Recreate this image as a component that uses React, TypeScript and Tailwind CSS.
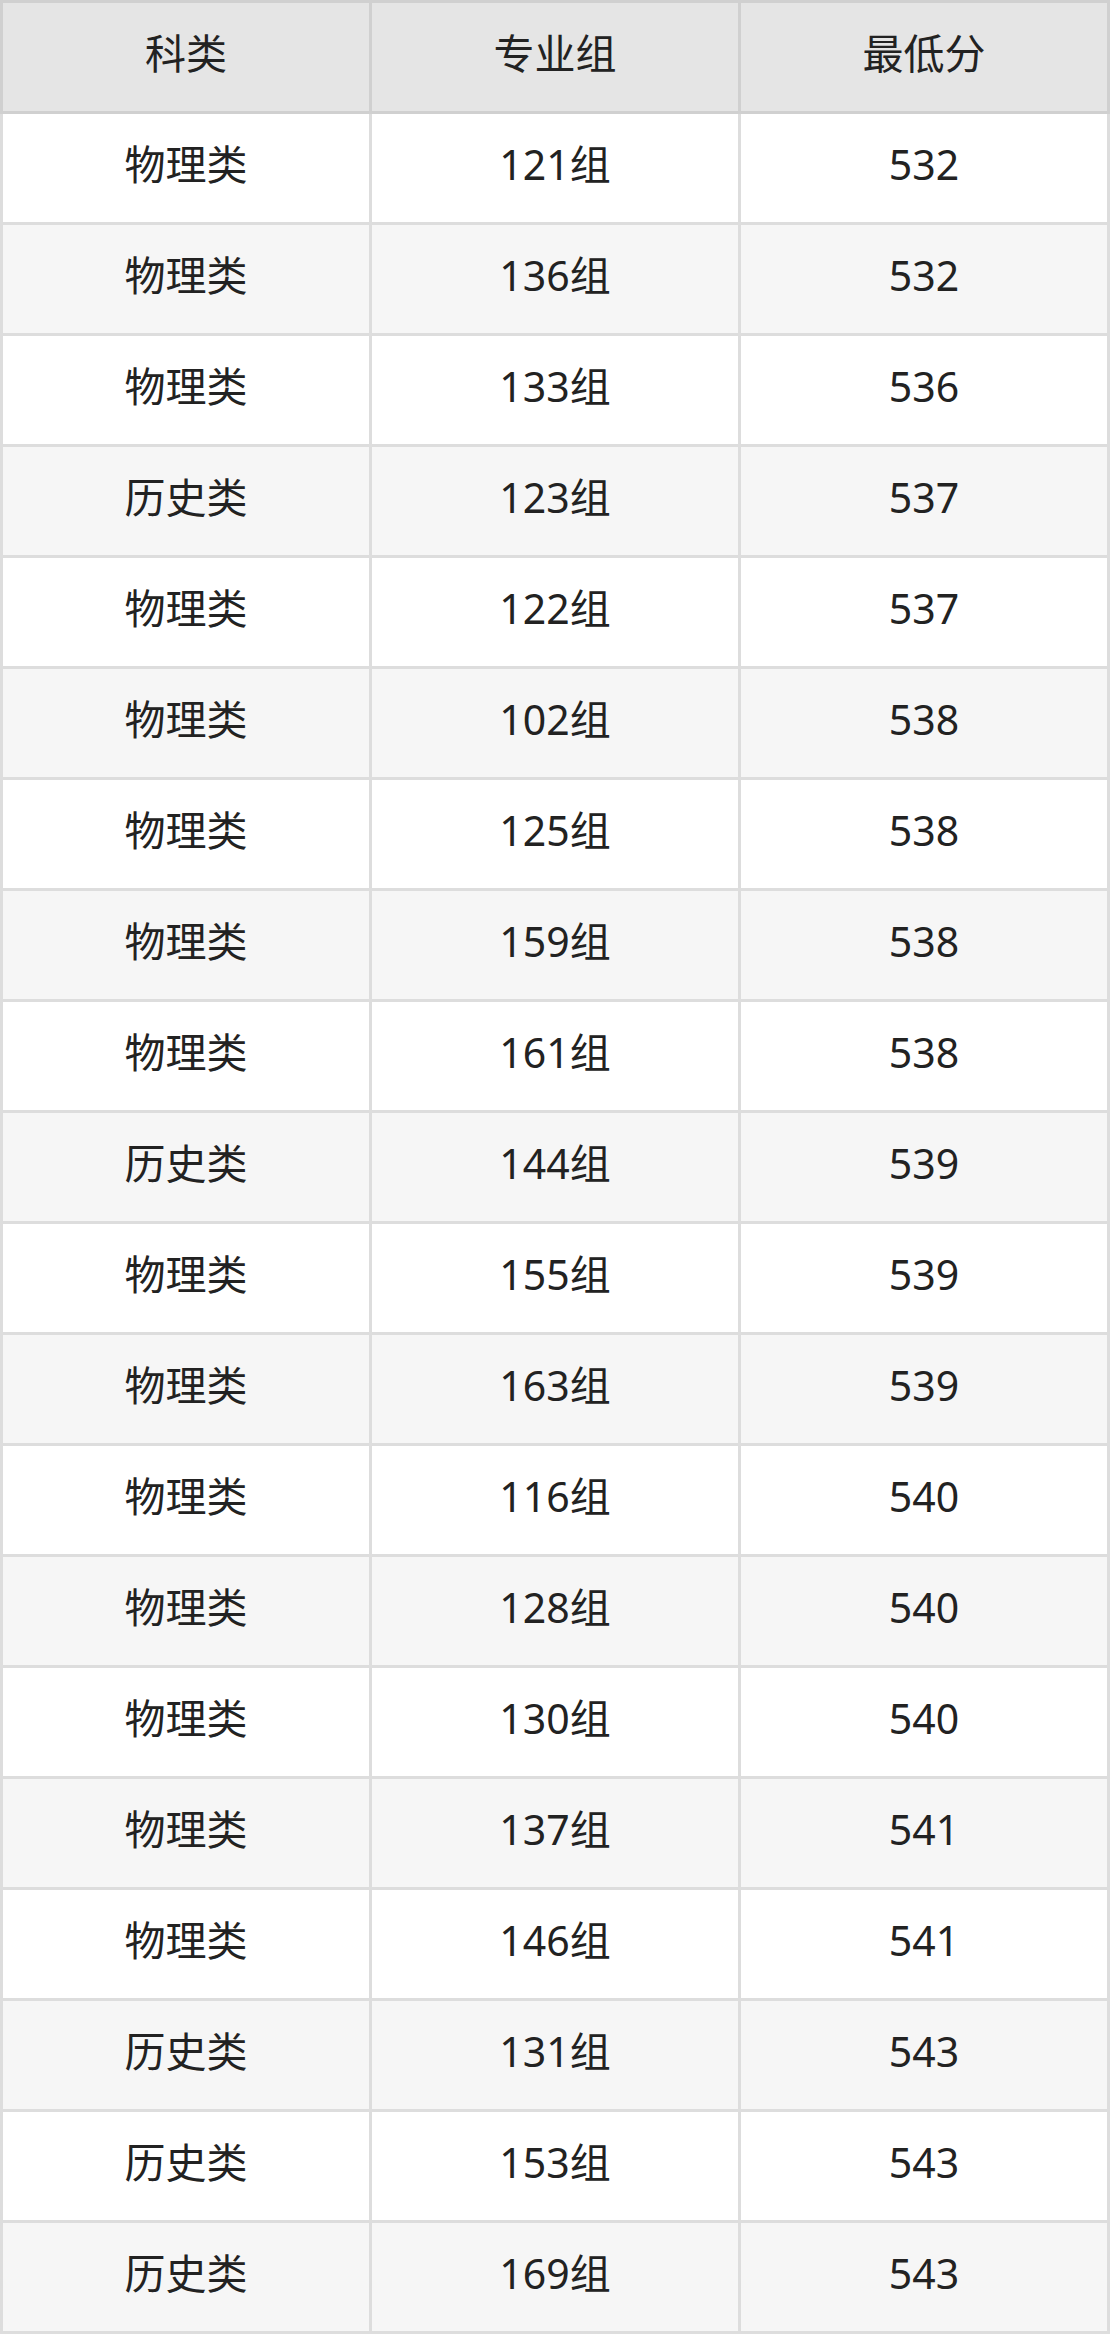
const rows: [string, string, string][] = [
  ["物理类", "121组", "532"],
  ["物理类", "136组", "532"],
  ["物理类", "133组", "536"],
  ["历史类", "123组", "537"],
  ["物理类", "122组", "537"],
  ["物理类", "102组", "538"],
  ["物理类", "125组", "538"],
  ["物理类", "159组", "538"],
  ["物理类", "161组", "538"],
  ["历史类", "144组", "539"],
  ["物理类", "155组", "539"],
  ["物理类", "163组", "539"],
  ["物理类", "116组", "540"],
  ["物理类", "128组", "540"],
  ["物理类", "130组", "540"],
  ["物理类", "137组", "541"],
  ["物理类", "146组", "541"],
  ["历史类", "131组", "543"],
  ["历史类", "153组", "543"],
  ["历史类", "169组", "543"],
];

const headers = ["科类", "专业组", "最低分"];

export default function App() {
  return (
    <div
      className="w-[1110px] bg-white text-[41px] text-[#222222]"
      style={{ fontFamily: '"Noto Sans", "Noto Sans CJK SC", sans-serif' }}
    >
      <div className="grid grid-cols-3 border-t-[3px] border-l-[3px] border-[#d0d0d0] bg-[#e5e5e5]">
        {headers.map((h) => (
          <div
            key={h}
            className="h-[111px] pb-[6px] flex items-center justify-center border-r-[3px] border-b-[3px] border-[#d0d0d0]"
          >
            {h}
          </div>
        ))}
      </div>
      {rows.map((r, i) => (
        <div
          key={i}
          className={`grid grid-cols-3 border-l-[3px] border-[#dddddd] ${
            i % 2 === 1 ? "bg-[#f6f6f6]" : "bg-white"
          }`}
        >
          {r.map((c, j) => (
            <div
              key={j}
              className="h-[111px] pb-[6px] flex items-center justify-center border-r-[3px] border-b-[3px] border-[#dddddd]"
            >
              {c}
            </div>
          ))}
        </div>
      ))}
    </div>
  );
}
